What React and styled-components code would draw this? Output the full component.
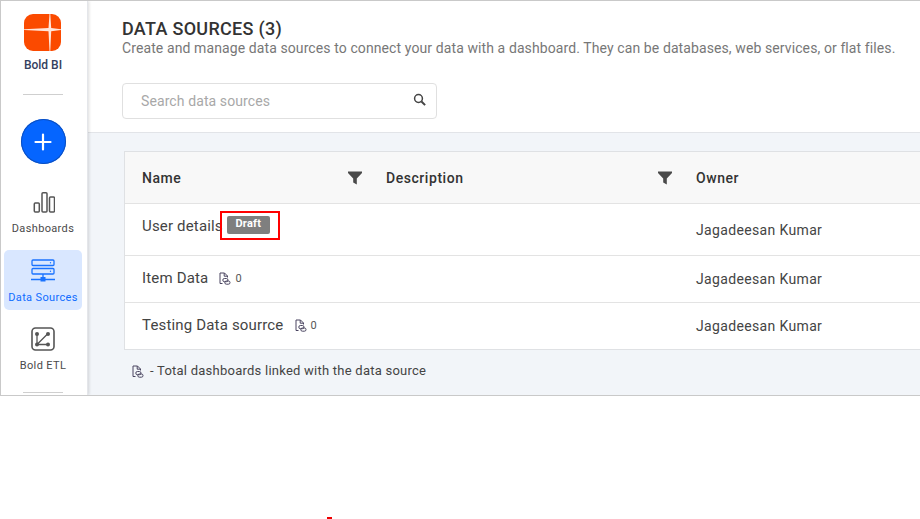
import React from 'react';
import styled, { createGlobalStyle } from 'styled-components';

const GlobalStyle = createGlobalStyle`
    html, body {
        margin: 0;
        padding: 0;
        background: #fff;
    }
    body {
        width: 920px;
        height: 519px;
        overflow: hidden;
        position: relative;
        font-family: Roboto, "Liberation Sans", sans-serif;
    }
`

const Frame = styled.div`
    display: flex;
    width: 920px;
    height: 396px;
    box-sizing: border-box;
    border: 1px solid #c9c9c9;
    border-right: 0;
    overflow: hidden;
`

const Sidebar = styled.aside`
    width: 87px;
    flex: none;
    display: flex;
    flex-direction: column;
    align-items: center;
    background: #fff;
    box-shadow: 1px 0 3px rgba(0, 0, 0, 0.14);
    border-right: 1px solid #e4e6ea;
    box-sizing: border-box;
    padding-right: 2px;
    position: relative;
    z-index: 2;
`

const Logo = styled.div`
    margin: 13px 1px 0 0;
    height: 37px;
    svg {
        display: block;
    }
`

const LogoText = styled.div`
    margin-top: 7px;
    font-size: 12px;
    line-height: 15px;
    font-weight: 500;
    color: #34405e;
`

const Divider = styled.div`
    width: 40px;
    height: 1px;
    background: #cfcfcf;
    flex: none;
    margin-top: ${p => p.$top}px;
`

const AddButton = styled.div`
    margin-top: 24px;
    width: 45px;
    height: 45px;
    border-radius: 50%;
    background: #0565ff;
    box-shadow: inset 0 0 0 1px #0b4fc0;
    display: flex;
    align-items: center;
    justify-content: center;
    flex: none;
`

const NavItem = styled.div`
    width: 78px;
    height: 60px;
    flex: none;
    border-radius: 5px;
    display: flex;
    flex-direction: column;
    align-items: center;
    padding-top: 9px;
    box-sizing: border-box;
    margin-top: ${p => p.$top}px;
    background: ${p => (p.$active ? '#d9e7ff' : 'transparent')};
    color: ${p => (p.$active ? '#0f6cff' : '#4a4a4a')};
    svg {
        display: block;
    }
`

const NavLabel = styled.div`
    margin-top: 8px;
    font-size: 11px;
    line-height: 14px;
    letter-spacing: 0.35px;
    white-space: nowrap;
`

const Main = styled.main`
    flex: 1;
    min-width: 0;
    display: flex;
    flex-direction: column;
`

const Header = styled.header`
    height: 132px;
    flex: none;
    box-sizing: border-box;
    padding: 18px 0 0 34px;
    background: #fff;
    border-bottom: 1px solid #e2e4e8;
`

const Title = styled.h1`
    margin: 0;
    font-size: 18px;
    line-height: 19px;
    font-weight: 500;
    letter-spacing: 0.3px;
    color: #333;
`

const Subtitle = styled.p`
    margin: 2px 0 0;
    font-size: 14px;
    line-height: 17px;
    letter-spacing: 0.1px;
    color: #777;
    white-space: nowrap;
`

const Search = styled.div`
    margin-top: 26px;
    width: 315px;
    height: 36px;
    box-sizing: border-box;
    border: 1px solid #e0e0e0;
    border-radius: 4px;
    padding: 0 10px 0 18px;
    display: flex;
    align-items: center;
    justify-content: space-between;
    font-size: 14px;
    letter-spacing: 0.1px;
    color: #a8a8a8;
    svg {
        display: block;
        margin-top: -3px;
    }
`

const Content = styled.section`
    flex: 1;
    background: #f2f5f9;
    padding: 18px 0 0 36px;
`

const Table = styled.div`
    border: 1px solid #dfe1e4;
    border-right: 0;
    background: #fff;
`

const Row = styled.div`
    display: grid;
    grid-template-columns: 244px 310px 1fr;
    height: ${p => p.$height}px;
    box-sizing: border-box;
    align-items: center;
    padding-left: 17px;
    background: ${p => (p.$head ? '#f8f8f8' : '#fff')};
    border-bottom: ${p => (p.$last ? '0' : '1px solid #e3e3e3')};
`

const HeadCell = styled.div`
    display: flex;
    align-items: center;
    justify-content: space-between;
    padding-right: 24px;
    font-size: 14px;
    font-weight: 500;
    letter-spacing: 0.55px;
    color: #333;
    svg {
        display: block;
    }
`

const NameCell = styled.div`
    display: flex;
    align-items: center;
    font-size: 15px;
    letter-spacing: 0.17px;
    color: #444;
    margin-top: ${p => p.$shift || 0}px;
`

const OwnerCell = styled.div`
    font-size: 14px;
    letter-spacing: 0.35px;
    color: #444;
`

const DraftWrap = styled.span`
    position: relative;
    margin-left: 4px;
    margin-top: -2px;
    display: inline-flex;
`

const Draft = styled.span`
    width: 43px;
    height: 18px;
    border-radius: 2px;
    background: #7f7f7f;
    color: #fff;
    font-size: 11px;
    font-weight: 700;
    line-height: 16px;
    text-align: center;
    letter-spacing: 0.2px;
`

const Highlight = styled.span`
    position: absolute;
    left: -7px;
    top: -5px;
    width: 60px;
    height: 29px;
    box-sizing: border-box;
    border: 2px solid #f00;
`

const Count = styled.span`
    display: inline-flex;
    align-items: center;
    margin-left: 11px;
    gap: 4px;
    font-size: 11px;
    letter-spacing: 0;
    color: #555;
    svg {
        display: block;
    }
`

const Legend = styled.div`
    display: flex;
    align-items: center;
    gap: 6px;
    margin: 13px 0 0 8px;
    font-size: 13px;
    line-height: 16px;
    letter-spacing: 0.24px;
    color: #444;
    svg {
        display: block;
    }
`

const RedMark = styled.div`
    position: absolute;
    left: 327px;
    top: 517px;
    width: 5px;
    height: 2px;
    background: #ee0000;
`

const FunnelIcon = () => (
    <svg width="14" height="14" viewBox="0 0 14 14">
        <path d="M0 .5h14v1.600L8.800 7.400v6.100L5.200 11.600V7.400L0 2.100z" fill="#4a4a4a" />
    </svg>
)

const LinkedIcon = () => (
    <svg width="12" height="13" viewBox="0 0 12 13" fill="none" stroke="#4a4560" strokeWidth="1">
        <path d="M3.500 11.500H1V1h4.500L8.500 4v1.500" />
        <path d="M5.200 1v3.200h3.300" />
        <rect x="3.800" y="6.500" width="5.200" height="3.200" rx="1.600" />
        <rect x="5.800" y="9" width="5.200" height="3.200" rx="1.600" />
    </svg>
)

const rows = [
    { id: 1, title: 'Item Data', owner: 'Jagadeesan Kumar', height: 47 },
    { id: 2, title: 'Testing Data sourrce', owner: 'Jagadeesan Kumar', height: 46, last: true },
]

const App = () => {
    return (
        <>
            <GlobalStyle />
            <Frame>
                <Sidebar>
                    <Logo>
                        <svg width="37" height="37" viewBox="0 0 37 37">
                            <rect width="37" height="37" rx="9" fill="#fb4a00" />
                            <path d="M25.500 0h.8l.9 14 9.800 1.200v.8l-9.800 1.300-.9 19.700h-.8l-1-19.700L0 16v-.8L24.500 14z" fill="#ffe6db" />
                        </svg>
                    </Logo>
                    <LogoText>Bold BI</LogoText>
                    <Divider $top={21} />
                    <AddButton>
                        <svg width="18" height="18" viewBox="0 0 18 18">
                            <path d="M9 1.500v15M1.500 9h15" stroke="#fff" strokeWidth="2.200" strokeLinecap="round" />
                        </svg>
                    </AddButton>
                    <NavItem $top={17}>
                        <svg width="24" height="24" viewBox="0 0 24 24" fill="none" stroke="#555" strokeWidth="1.500">
                            <rect x="3.300" y="13" width="5" height="9" rx="1" />
                            <rect x="11" y="2.800" width="5" height="19.200" rx="1" />
                            <rect x="18.500" y="7" width="5" height="15" rx="1" />
                        </svg>
                        <NavLabel>Dashboards</NavLabel>
                    </NavItem>
                    <NavItem $top={9} $active>
                        <svg width="24" height="24" viewBox="0 0 24 24" fill="none" stroke="#1a73ff" strokeWidth="1.300">
                            <rect x="1" y="1" width="22" height="5.500" rx="1" />
                            <rect x="1" y="9.500" width="22" height="5.500" rx="1" />
                            <path d="M12 15v4M0 20.500h24" />
                            <rect x="9.500" y="18" width="5" height="4.500" fill="#1a73ff" stroke="none" />
                            <circle cx="19.500" cy="3.700" r=".7" fill="#1a73ff" stroke="none" />
                            <circle cx="19.500" cy="12.200" r=".7" fill="#1a73ff" stroke="none" />
                        </svg>
                        <NavLabel>Data Sources</NavLabel>
                    </NavItem>
                    <NavItem $top={8}>
                        <svg width="24" height="24" viewBox="0 0 24 24" fill="none" stroke="#555" strokeWidth="1.600">
                            <rect x="1" y="1" width="22" height="22" rx="3.500" />
                            <path d="M6 7v10.500h11M6 17.500L16.500 7" strokeWidth="1.300" />
                            <circle cx="6" cy="7" r="2" fill="#555" stroke="none" />
                            <circle cx="6" cy="17.500" r="2" fill="#555" stroke="none" />
                            <circle cx="17" cy="17.500" r="2" fill="#555" stroke="none" />
                            <circle cx="17" cy="7" r="2" fill="#555" stroke="none" />
                        </svg>
                        <NavLabel>Bold ETL</NavLabel>
                    </NavItem>
                    <Divider $top={14} />
                </Sidebar>
                <Main>
                    <Header>
                        <Title>DATA SOURCES (3)</Title>
                        <Subtitle>Create and manage data sources to connect your data with a dashboard. They can be databases, web services, or flat files.</Subtitle>
                        <Search>
                            Search data sources
                            <svg width="13" height="13" viewBox="0 0 13 13" fill="none" stroke="#444" strokeWidth="1.500">
                                <circle cx="5.500" cy="5.500" r="3.900" />
                                <path d="M8.500 8.500l3.600 3.600" strokeWidth="2" />
                            </svg>
                        </Search>
                    </Header>
                    <Content>
                        <Table>
                            <Row $head $height={52}>
                                <HeadCell>Name<FunnelIcon /></HeadCell>
                                <HeadCell>Description<FunnelIcon /></HeadCell>
                                <HeadCell>Owner</HeadCell>
                            </Row>
                            <Row $height={52}>
                                <NameCell $shift={-7}>
                                    User details
                                    <DraftWrap>
                                        <Draft>Draft</Draft>
                                        <Highlight />
                                    </DraftWrap>
                                </NameCell>
                                <div />
                                <OwnerCell>Jagadeesan Kumar</OwnerCell>
                            </Row>
                            {rows.map(item => (
                                <Row key={item.id} $height={item.height} $last={item.last}>
                                    <NameCell $shift={-2}>
                                        {item.title}
                                        <Count><LinkedIcon />0</Count>
                                    </NameCell>
                                    <div />
                                    <OwnerCell>{item.owner}</OwnerCell>
                                </Row>
                            ))}
                        </Table>
                        <Legend><LinkedIcon />- Total dashboards linked with the data source</Legend>
                    </Content>
                </Main>
            </Frame>
            <RedMark />
        </>
    );
};

export default App;
